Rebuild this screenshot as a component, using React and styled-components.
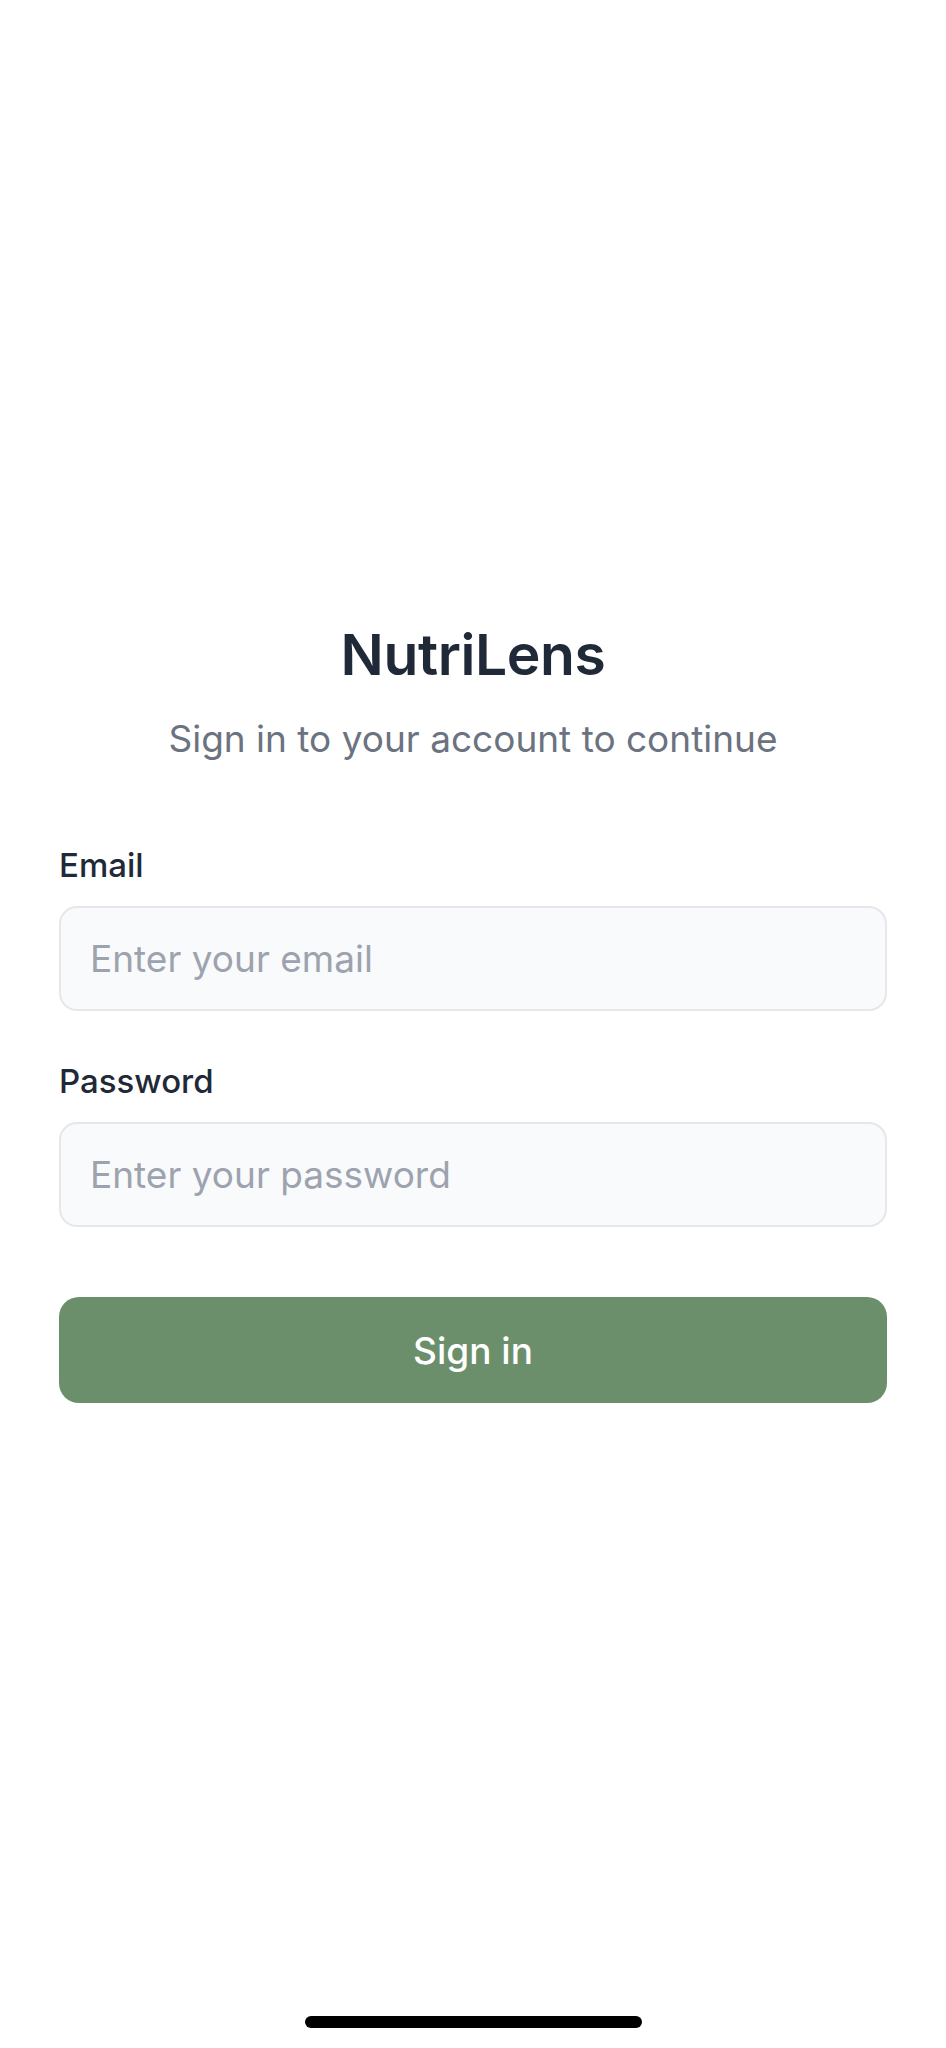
import React from "react";
import styled, { createGlobalStyle } from "styled-components";

const GlobalStyle = createGlobalStyle`
  *, *::before, *::after { box-sizing: border-box; }
  html, body { margin: 0; padding: 0; background: #ffffff; }
  body {
    font-family: Inter, "Noto Sans", "Liberation Sans", sans-serif;
    -webkit-font-smoothing: antialiased;
  }
`;

const Screen = styled.div`
  position: relative;
  width: 946px;
  height: 2048px;
  background: #ffffff;
  display: flex;
  flex-direction: column;
  padding: 620px 59px 0 59px;
`;

const Header = styled.header`
  display: flex;
  flex-direction: column;
  align-items: center;
`;

const Title = styled.h1`
  margin: 0;
  font-size: 57px;
  line-height: 70px;
  font-weight: 600;
  color: #1f2937;
  letter-spacing: -0.4px;
`;

const Subtitle = styled.p`
  margin: 26px 0 0 0;
  font-size: 37px;
  line-height: 46px;
  font-weight: 400;
  color: #6b7280;
`;

const Form = styled.form`
  display: flex;
  flex-direction: column;
  margin-top: 83px;
`;

const Field = styled.div`
  display: flex;
  flex-direction: column;
  gap: 20px;
  margin-top: ${(p) => p.$offset || 0}px;
`;

const Label = styled.label`
  font-size: 33px;
  line-height: 41px;
  font-weight: 500;
  color: #1f2937;
`;

const Input = styled.input`
  width: 100%;
  height: 105px;
  padding: 0 29px;
  border: 2px solid #e5e7eb;
  border-radius: 18px;
  background: #f9fafb;
  font-family: inherit;
  font-size: 37px;
  color: #1f2937;
  outline: none;
  &::placeholder { color: #9ca3af; }
`;

const Button = styled.button`
  margin-top: 70px;
  width: 100%;
  height: 106px;
  border: none;
  border-radius: 20px;
  background: #6b8f6b;
  color: #ffffff;
  font-family: inherit;
  font-size: 37px;
  font-weight: 500;
  cursor: pointer;
`;

const HomeIndicator = styled.div`
  position: absolute;
  left: 305px;
  bottom: 20px;
  width: 337px;
  height: 12px;
  border-radius: 6px;
  background: #000000;
`;

export default function App() {
  return (
    <>
      <GlobalStyle />
      <Screen>
        <Header>
          <Title>NutriLens</Title>
          <Subtitle>Sign in to your account to continue</Subtitle>
        </Header>
        <Form onSubmit={(e) => e.preventDefault()}>
          <Field>
            <Label htmlFor="email">Email</Label>
            <Input id="email" type="email" placeholder="Enter your email" />
          </Field>
          <Field $offset={50}>
            <Label htmlFor="password">Password</Label>
            <Input id="password" type="password" placeholder="Enter your password" />
          </Field>
          <Button type="submit">Sign in</Button>
        </Form>
        <HomeIndicator />
      </Screen>
    </>
  );
}
